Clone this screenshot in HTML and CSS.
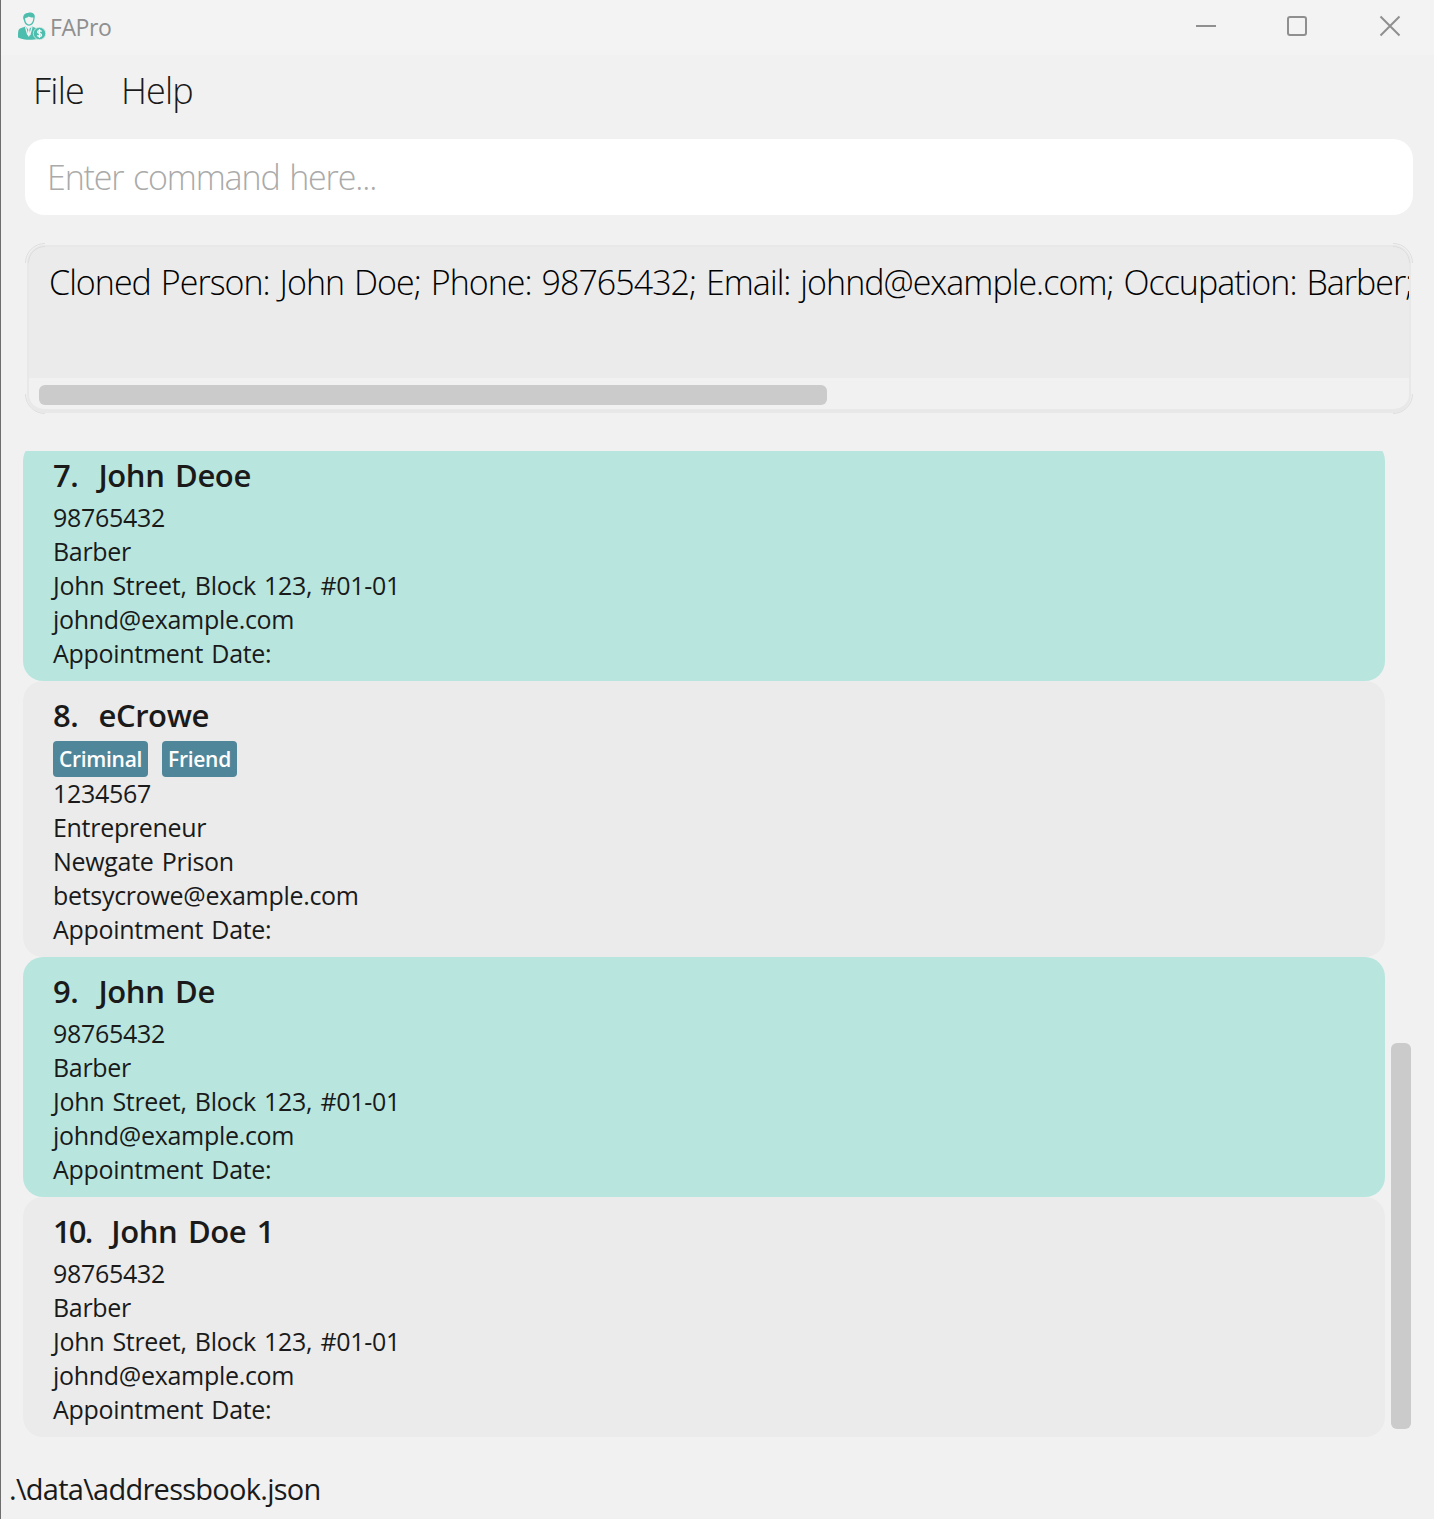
FILE: index.html
```html
<!DOCTYPE html>
<html lang="en">
<head>
<meta charset="utf-8">
<title>FAPro</title>
<link rel="stylesheet" href="styles.css">
</head>
<body>
<div class="window">
  <header class="titlebar">
    <svg class="app-icon" viewBox="0 0 28 28" width="28" height="28">
      <path class="teal" d="M5.3 7C4.7 3 7 .8 10 .9 12 0 16.800 .5 16.800 4.500L16.300 8C15.800 11.500 13.500 13.700 11 13.700S6.400 11.500 6 8.500Z"/>
      <path class="face" d="M7 6.300C9 6 10 5 10.800 4.600 12 5.400 14 5.600 15.300 5.500 15.500 9 13.500 12.400 11 12.400S7.200 9.500 7 6.300Z"/>
      <path class="teal" d="M7.500 14.500 10.500 17.500 14 14.500 19 16.500 20 27C14 28.300 5 28.200 0 25.500 0 20 0 17 2.500 16.200Z"/>
      <path class="cut" d="M7.500 15 9.800 23M14 15 11.800 23"/>
      <path class="tie" d="M9.800 16.500H11.700L11.300 18 12.300 22.500 10.800 25 9.400 22.500 10.300 18Z"/>
      <circle class="coin" cx="21.500" cy="21.500" r="6.200"/>
      <path class="dollar" d="M23.500 19.600C23 18.200 19.600 18.200 19.600 20 19.600 21.800 23.600 21 23.600 23 23.600 24.800 20 24.800 19.400 23.200M21.500 17V26"/>
    </svg>
    <span class="app-title">FAPro</span>
    <div class="controls">
      <svg viewBox="0 0 22 22" width="22" height="22"><path d="M1 11H21"/></svg>
      <svg viewBox="0 0 22 22" width="22" height="22"><rect x="1" y="2" width="18" height="18" rx="2"/></svg>
      <svg viewBox="0 0 22 22" width="22" height="22"><path d="M1.500 1.500 20.500 20.500M20.500 1.500 1.500 20.500"/></svg>
    </div>
  </header>
  <nav class="menu"><span>File</span><span>Help</span></nav>
  <div class="command">Enter command here...</div>
  <section class="result">
    <div class="result-text">Cloned Person: John Doe; Phone: 98765432; Email: johnd@example.com; Occupation: Barber;</div>
    <div class="hscroll"><div class="hthumb"></div></div>
    <svg class="corners" viewBox="0 0 1388 171" width="1388" height="171">
      <path d="M.5 20A19.500 19.500 0 0 1 20 .5M3.500 20A16.500 16.500 0 0 1 20 3.500M1368 .5A19.500 19.500 0 0 1 1387.500 20M1368 3.500A16.500 16.500 0 0 1 1384.500 20M1387.500 151A19.500 19.500 0 0 1 1368 170.500M.5 151A19.500 19.500 0 0 0 20 170.500"/>
    </svg>
  </section>
  <main class="people">
    <div class="list">
      <article class="card mint">
        <h2><span>7.</span><span>John Deoe</span></h2>
        <p>98765432</p><p>Barber</p><p>John Street, Block 123, #01-01</p><p>johnd@example.com</p><p>Appointment Date:</p>
      </article>
      <article class="card">
        <h2><span>8.</span><span>eCrowe</span></h2>
        <div class="tags"><span>Criminal</span><span>Friend</span></div>
        <p>1234567</p><p>Entrepreneur</p><p>Newgate Prison</p><p>betsycrowe@example.com</p><p>Appointment Date:</p>
      </article>
      <article class="card mint">
        <h2><span>9.</span><span>John De</span></h2>
        <p>98765432</p><p>Barber</p><p>John Street, Block 123, #01-01</p><p>johnd@example.com</p><p>Appointment Date:</p>
      </article>
      <article class="card">
        <h2><span class="wide-index">10.</span><span>John Doe 1</span></h2>
        <p>98765432</p><p>Barber</p><p>John Street, Block 123, #01-01</p><p>johnd@example.com</p><p>Appointment Date:</p>
      </article>
    </div>
    <div class="vscroll"><div class="vthumb"></div></div>
  </main>
  <footer class="status">.\data\addressbook.json</footer>
</div>
</body>
</html>
```
FILE: styles.css
```css
* { box-sizing: border-box; }
body { margin: 0; background: #f1f1f1; color: #1a1a1a; font-family: "Segoe UI", "Open Sans", sans-serif; }
.window { display: flex; flex-direction: column; height: 1519px; border-left: 1px solid #6e6e6e; overflow: hidden; white-space: nowrap; }
.titlebar { display: flex; align-items: center; height: 55px; padding: 0 33px 3px 17px; background: #f3f3f3; }
.app-icon { flex: none; }
.teal, .coin { fill: #4dbdad; }
.face, .tie { fill: #f3f3f3; }
.cut { fill: none; stroke: #f3f3f3; stroke-width: 1.2; }
.coin { stroke: #d9eeea; stroke-width: .8; }
.dollar { fill: none; stroke: #fff; stroke-width: 1.3; }
.app-title { margin: 1px 0 0 4px; color: #8f8f8f; font-size: 23px; letter-spacing: -.4px; }
.controls { display: flex; gap: 70px; margin-left: auto; }
.controls svg { fill: none; stroke: #8f8f8f; stroke-width: 2; }
.menu { display: flex; gap: 37px; height: 84px; padding: 11px 0 0 32px; font-size: 36px; font-weight: 300; line-height: 50px; letter-spacing: -.8px; }
.command { height: 76px; margin: 0 21px 0 24px; padding-left: 22px; border-radius: 20px; background: #fff; color: #aaa; font-size: 34px; font-weight: 300; line-height: 76px; letter-spacing: -1.15px; word-spacing: 2px; }
.result { position: relative; display: flex; flex-direction: column; height: 168px; margin: 30px 23px 0 26px; border: 2px solid #e8e8e8; border-bottom-width: 4px; border-radius: 18px; background: #f1f1f1; }
.result-text { height: 131px; padding: 10px 0 0 20px; border-radius: 16px 16px 0 0; background: #ebebeb; color: #000; font-size: 34px; font-weight: 300; line-height: 50px; letter-spacing: -.97px; word-spacing: 2px; overflow: hidden; }
.hscroll { flex: 1; padding: 7px 10px 0; }
.hthumb { width: 788px; height: 20px; border-radius: 6px; background: #cbcbcb; }
.corners { position: absolute; left: -4px; top: -4px; fill: none; stroke: #dedede; }
.people { display: flex; gap: 6px; height: 986px; margin: 38px 22px 0 22px; }
.list { display: flex; flex-direction: column; justify-content: flex-end; width: 1362px; overflow: hidden; }
.card { flex: none; padding: 10px 30px; border-radius: 20px; background: #ebebeb; }
.mint { background: #b8e6de; }
h2 { display: flex; gap: 20px; height: 50px; margin: 0; font-size: 31px; font-weight: 600; line-height: 49px; letter-spacing: -.4px; word-spacing: 3px; }
.wide-index { letter-spacing: -1.9px; }
p { height: 34px; margin: 0; font-size: 25px; line-height: 32px; letter-spacing: -.3px; word-spacing: 2px; }
.tags { display: flex; gap: 14px; height: 36px; }
.tags span { padding: 0 6px; border-radius: 4px; background: #50869a; color: #fff; font-size: 21px; font-weight: 600; line-height: 36px; letter-spacing: -.3px; }
.vscroll { display: flex; flex-direction: column; justify-content: flex-end; padding-bottom: 8px; }
.vthumb { width: 20px; height: 386px; border-radius: 6px; background: #cbcbcb; }
.status { margin-left: 8px; padding-top: 31px; font-size: 29px; line-height: 42px; letter-spacing: -.73px; }
```
